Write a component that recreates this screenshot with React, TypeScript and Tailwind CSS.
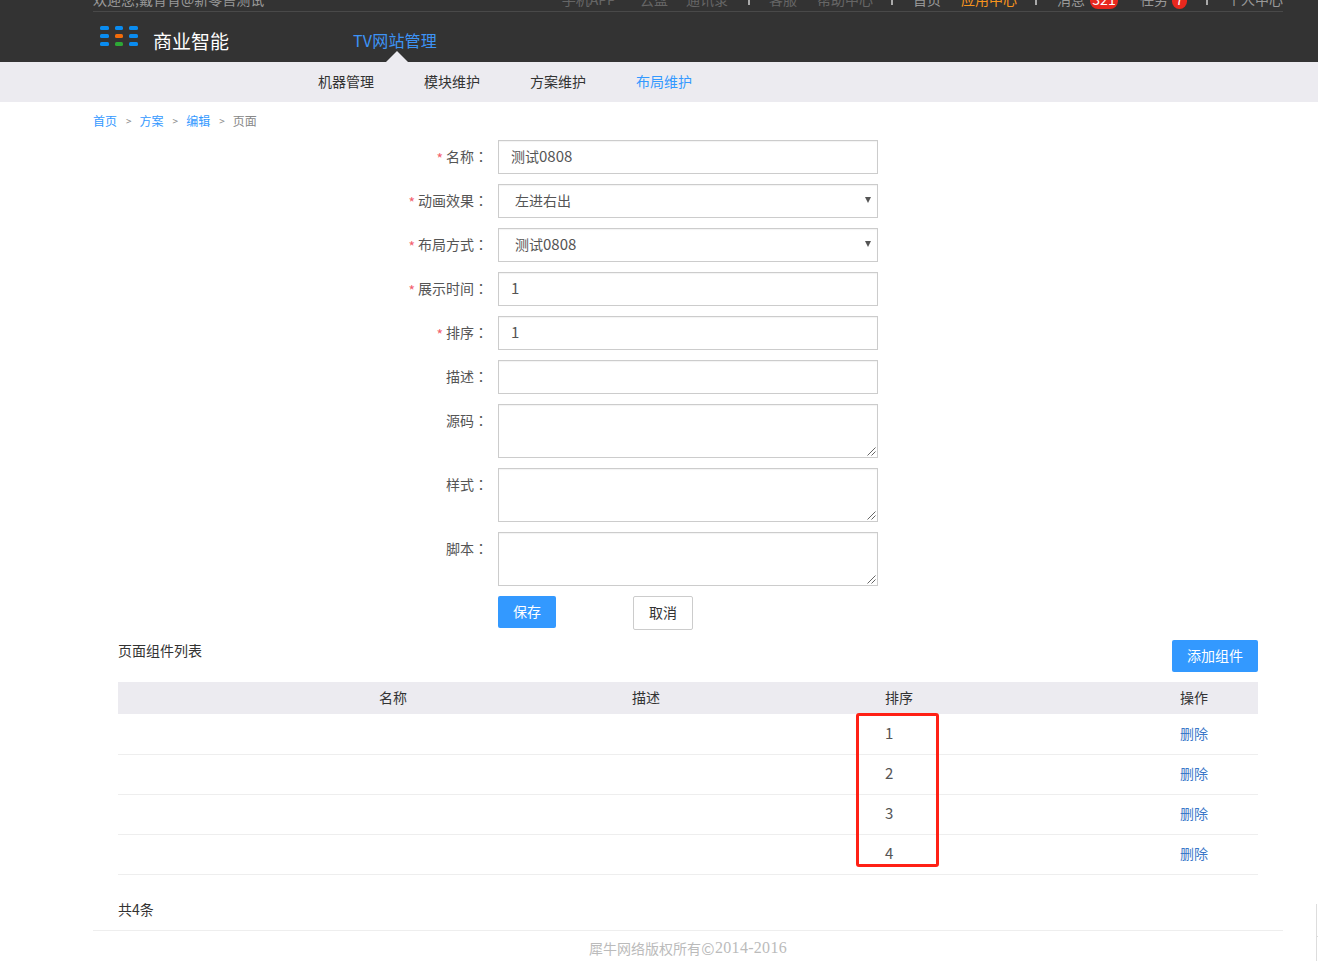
import type { ReactNode } from "react";

function Sep({ cls }: { cls: string }) {
  return <span className={`w-[2px] h-3 bg-[#aaa] self-start mt-[4px] ${cls}`} />;
}

function Row({ label, req, children }: { label: string; req?: boolean; children: ReactNode }) {
  return (
    <div className="flex mb-[10px]">
      <div className="w-[488px] h-[34px] pb-[2px] flex items-center justify-end text-sm text-[#555]">
        {req && <span className="text-[#f2606e] text-sm mr-[3px] mt-[3px]">*</span>}
        <span>{label}</span>
        <span className="font-['Noto_Sans_CJK_TC',sans-serif]">：</span>
      </div>
      <div className="ml-[10px]">{children}</div>
    </div>
  );
}

function Text({ value }: { value?: ReactNode }) {
  return (
    <div className="w-[380px] h-[34px] border border-[#ccc] shadow-[inset_0_1px_1px_rgba(0,0,0,0.05)] pl-3 pb-[2px] flex items-center text-sm text-[#555]">
      {value}
    </div>
  );
}

function Sel({ value }: { value: ReactNode }) {
  return (
    <div className="w-[380px] h-[34px] border border-[#ccc] shadow-[inset_0_1px_1px_rgba(0,0,0,0.05)] pl-4 pr-[6px] pb-[2px] flex items-center justify-between text-sm text-[#555]">
      <span>{value}</span>
      <svg width="6" height="6" viewBox="0 0 6 6"><path d="M0 0h6L3 6z" fill="#555" /></svg>
    </div>
  );
}

function Area() {
  return (
    <div className="relative w-[380px] h-[54px] border border-[#ccc] shadow-[inset_0_1px_1px_rgba(0,0,0,0.05)]">
      <svg width="9" height="9" viewBox="0 0 9 9" className="absolute right-[1px] bottom-[1px]">
        <path d="M0.5 8.5L8.5 0.5M4.5 8.5L8.5 4.5" stroke="#666" strokeWidth="1" fill="none" />
      </svg>
    </div>
  );
}

function Num({ children }: { children: ReactNode }) {
  return <span className="text-[15px]">{children}</span>;
}

const cols = "grid grid-cols-[261px_253px_253px_295px_78px]";
const dots = ["#0a8cf0", "#0a8cf0", "#0a8cf0", "#0a8cf0", "#f26b0a", "#0a8cf0", "#0a8cf0", "#2ea836", "#0a8cf0"];

export default function App() {
  return (
    <div className="relative h-[961px] overflow-hidden bg-white text-[#333] font-['Noto_Sans_CJK_SC','Noto_Sans',sans-serif]">
      <header className="h-[62px] bg-[#333]">
        <div className="ml-[93px] mr-[35px] h-[12px] border-b border-[#494949] overflow-hidden">
          <div className="-mt-[11px] h-5 flex justify-between text-sm leading-5 text-[#999]">
            <span>欢迎您,戴育育@新零售测试</span>
            <div className="flex">
              <span className="text-[#666]">手机APP</span>
              <span className="text-[#666] ml-6">云盘</span>
              <span className="text-[#666] ml-[18px]">通讯录</span>
              <Sep cls="ml-5 mr-[19px]" />
              <span className="text-[#666]">客服</span>
              <span className="text-[#666] ml-5">帮助中心</span>
              <Sep cls="ml-[18px] mr-5" />
              <span className="text-[#999]">首页</span>
              <span className="text-[#f7941d] ml-5">应用中心</span>
              <Sep cls="ml-[18px] mr-5" />
              <span className="text-[#999]">消息</span>
              <span className="ml-[5px] w-7 h-5 rounded-[8px] bg-[#e8281e] text-white text-center text-sm">321</span>
              <span className="text-[#999] ml-[22px]">任务</span>
              <span className="ml-[4px] w-[15px] h-5 rounded-full bg-[#e8281e] text-white text-center text-sm">7</span>
              <Sep cls="ml-[19px] mr-[19px]" />
              <span className="text-[#999]">个人中心</span>
            </div>
          </div>
        </div>
        <div className="relative h-[50px] flex">
          <div className="ml-[100px] mt-[14px] grid grid-cols-3 gap-x-[6px] gap-y-[4px] h-5 w-[38px]">
            {dots.map((c, i) => (
              <span key={i} className="h-1 rounded-[1.5px]" style={{ background: c }} />
            ))}
          </div>
          <span className="ml-[15px] mt-[15px] h-7 text-[19px] leading-7 text-white">商业智能</span>
          <span className="ml-[124px] mt-[16px] h-6 text-base leading-6 text-[#3d93f5] tracking-[0.2px]">TV网站管理</span>
          <span className="absolute left-[386px] bottom-0 w-0 h-0 border-x-[11px] border-x-transparent border-b-[11px] border-b-[#ecebf0]" />
        </div>
      </header>

      <nav className="h-10 bg-[#ecebf0] pl-[318px] pb-[2px] flex items-center gap-[50px] text-sm">
        <span>机器管理</span>
        <span>模块维护</span>
        <span>方案维护</span>
        <span className="text-[#39f]">布局维护</span>
      </nav>

      <div className="h-[38px] pl-[93px] flex items-center text-xs text-[#39f]">
        <span>首页</span>
        <span className="text-[#888] ml-[9px] mr-[8px] text-[10px]">&gt;</span>
        <span>方案</span>
        <span className="text-[#888] ml-[9px] mr-[8px] text-[10px]">&gt;</span>
        <span>编辑</span>
        <span className="text-[#888] ml-[9px] mr-[8px] text-[10px]">&gt;</span>
        <span className="text-[#888]">页面</span>
      </div>

      <form>
        <Row label="名称" req><Text value={<>测试<Num>0808</Num></>} /></Row>
        <Row label="动画效果" req><Sel value="左进右出" /></Row>
        <Row label="布局方式" req><Sel value={<>测试<Num>0808</Num></>} /></Row>
        <Row label="展示时间" req><Text value={<Num>1</Num>} /></Row>
        <Row label="排序" req><Text value={<Num>1</Num>} /></Row>
        <Row label="描述"><Text /></Row>
        <Row label="源码"><Area /></Row>
        <Row label="样式"><Area /></Row>
        <Row label="脚本"><Area /></Row>
        <div className="ml-[498px] flex items-start">
          <button type="button" className="w-[58px] h-8 pb-[2px] rounded-[2px] bg-[#39f] text-white text-sm">保存</button>
          <button type="button" className="ml-[77px] w-[60px] h-[34px] pb-[2px] rounded-[2px] border border-[#ccc] bg-white text-sm text-[#333]">取消</button>
        </div>
      </form>

      <section className="mx-[118px] w-[1140px] relative">
        <div className="flex justify-between items-start h-[42px] mt-[10px]">
          <span className="text-sm leading-5">页面组件列表</span>
          <button type="button" className="w-[86px] h-8 pb-[2px] rounded-[2px] bg-[#39f] text-white text-sm">添加组件</button>
        </div>
        <div className={`${cols} h-8 pb-[2px] bg-[#ecebf0] items-center text-sm`}>
          <span />
          <span>名称</span>
          <span>描述</span>
          <span>排序</span>
          <span>操作</span>
        </div>
        {[1, 2, 3, 4].map((n) => (
          <div key={n} className={`${cols} ${n === 1 ? "h-[41px]" : "h-10"} pb-[3px] border-b border-[#eee] items-center text-sm`}>
            <span />
            <span />
            <span />
            <span className="text-[#555]"><Num>{n}</Num></span>
            <span className="text-[#3a78c9]">删除</span>
          </div>
        ))}
        <span className="absolute left-[738px] top-[73px] w-[83px] h-[154px] border-[3px] border-[#ff2015] rounded-[3px]" />
        <div className="mt-6 text-sm leading-5">共4条</div>
      </section>

      <footer className="ml-[93px] mr-[35px] mt-[11px] border-t border-[#eee] h-[30px] flex items-center justify-center text-sm text-[#bbb]">
        <span className="mt-[5px] flex items-center">
          犀牛网络版权所有
          <span className="w-[14px] text-center text-base">©</span>
          <span className="text-base tracking-[0.3px] font-['Liberation_Serif',serif]">2014-2016</span>
        </span>
      </footer>

      <span className="absolute right-0 top-[904px] w-[2px] h-[57px] border-l border-[#ddd]" />
      <span className="absolute right-0 top-[936px] w-[1px] h-[1px] bg-[#ddd]" />
    </div>
  );
}
